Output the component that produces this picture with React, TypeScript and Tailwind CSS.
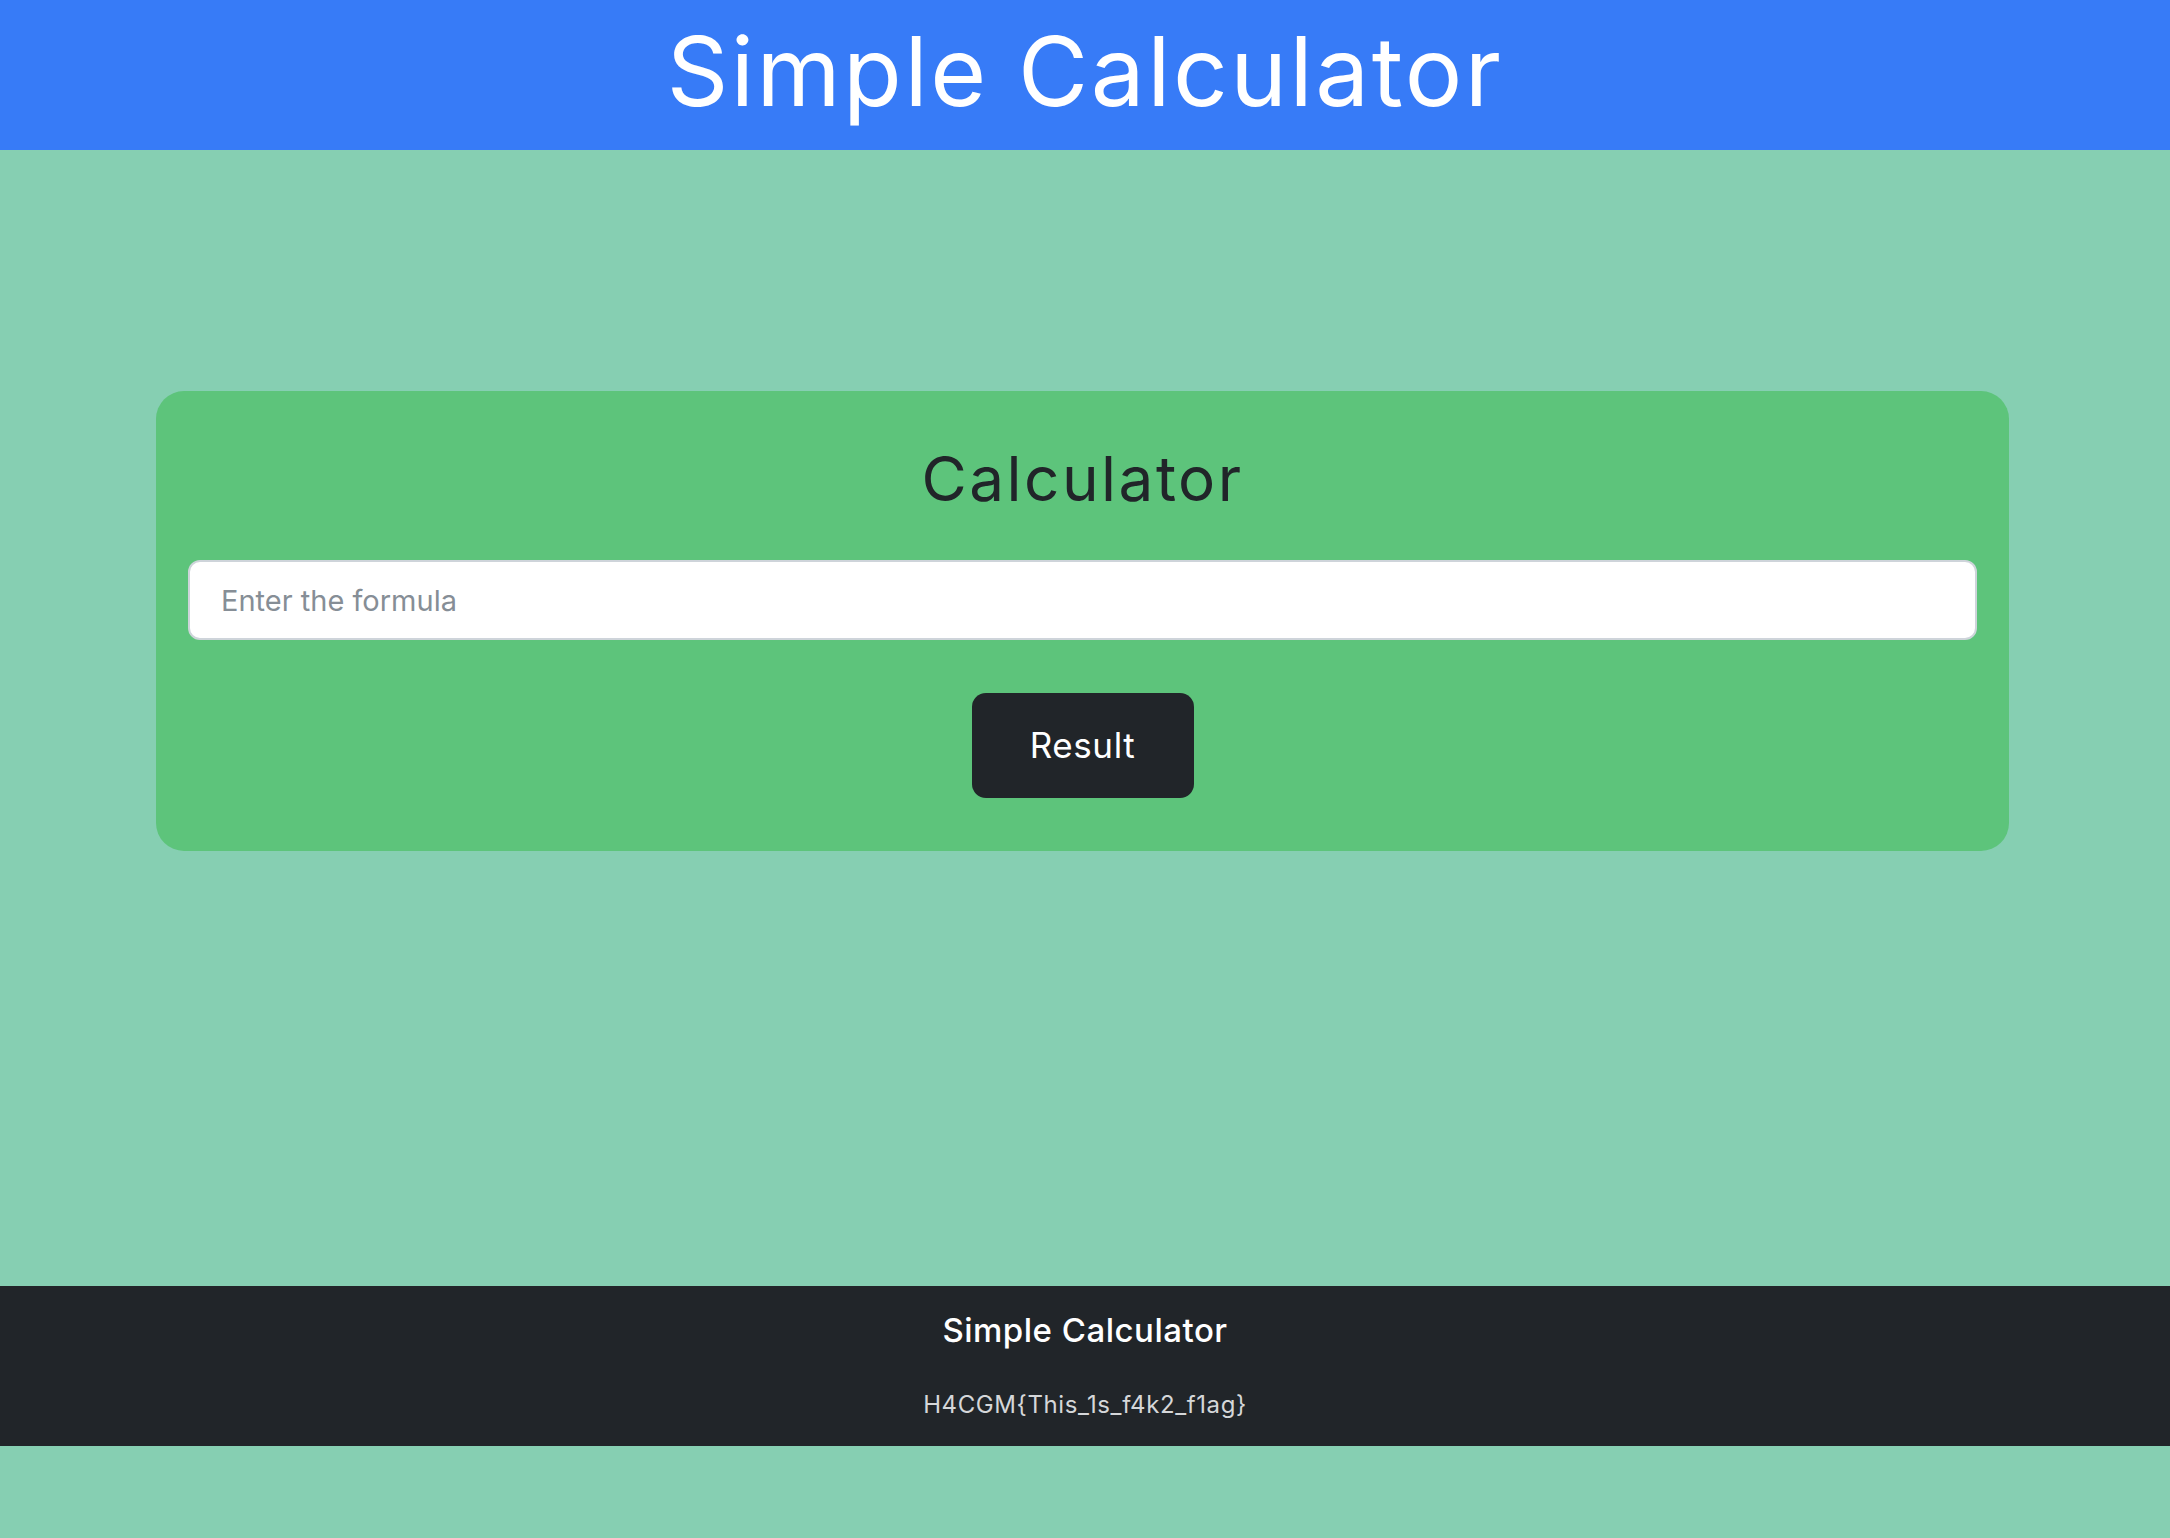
import React from "react";

export default function App() {
  return (
    <div className="min-h-[1538px] w-full bg-[#86cfb2] flex flex-col" style={{ fontFamily: "Inter, 'Noto Sans', sans-serif" }}>
      <header className="h-[150px] bg-[#377bf7] flex items-center justify-center">
        <h1 className="text-[96px] leading-none text-white font-normal tracking-[2.5px] pb-[8px]">Simple Calculator</h1>
      </header>
      <main className="h-[1136px] pt-[241px]">
        <div className="ml-[156px] w-[1853px] bg-[#5dc47b] rounded-[28px] px-[32px] pt-[57px] pb-[53px] flex flex-col items-center">
          <h2 className="text-[62px] leading-none text-[#212529] font-normal tracking-[2.5px]">Calculator</h2>
          <input
            type="text"
            placeholder="Enter the formula"
            className="mt-[50px] w-full h-[80px] bg-white rounded-[12px] border-2 border-[#ced4da] px-[31px] text-[29px] text-[#212529] placeholder:text-[#868e96] outline-none"
          />
          <button className="mt-[53px] w-[222px] h-[105px] rounded-[14px] bg-[#212529] text-white text-[35px] font-normal tracking-[0.6px]">
            Result
          </button>
        </div>
      </main>
      <footer className="h-[160px] bg-[#212529] flex flex-col items-center">
        <div className="mt-[28px] text-[33px] leading-none text-white font-medium tracking-[0.5px]">Simple Calculator</div>
        <div className="mt-[46px] text-[24px] leading-none text-[#d5d7d9] tracking-[0.6px]">H4CGM{"{"}This_1s_f4k2_f1ag{"}"}</div>
      </footer>
    </div>
  );
}
